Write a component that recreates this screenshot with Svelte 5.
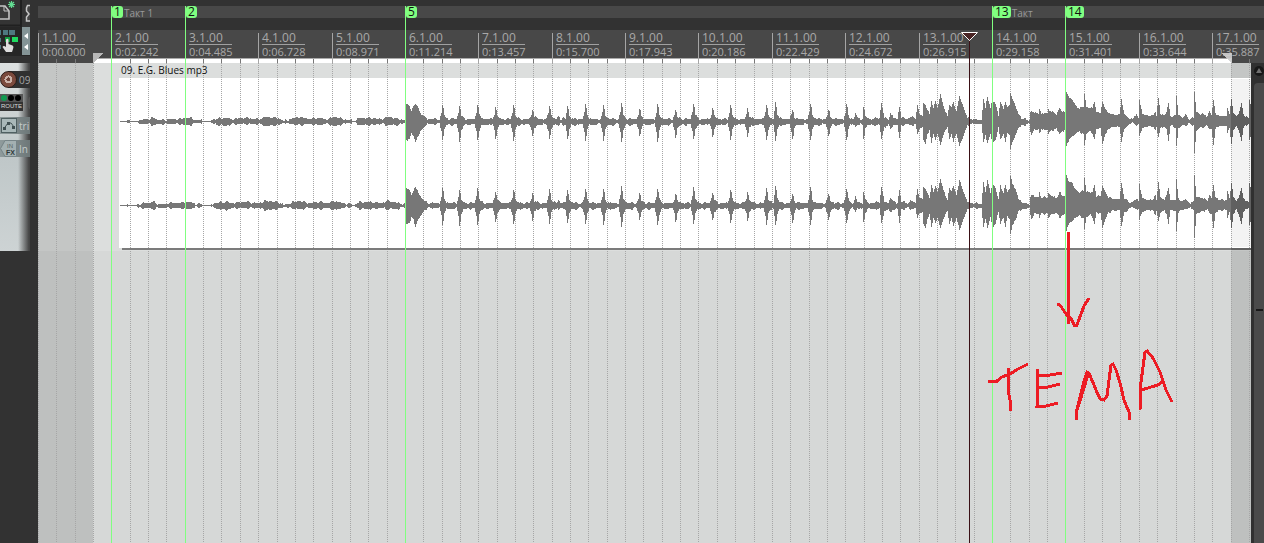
<script>
  const BAR = 73.388;
  const ORIGIN = 38;

  const times = [
    '0:00.000', '0:02.242', '0:04.485', '0:06.728', '0:08.971', '0:11.214',
    '0:13.457', '0:15.700', '0:17.943', '0:20.186', '0:22.429', '0:24.672',
    '0:26.915', '0:29.158', '0:31.401', '0:33.644', '0:35.887'
  ];

  const barX = (n) => Math.round(n * BAR);

  const bars = times.map((time, i) => ({
    label: `${i + 1}.1.00`,
    time,
    width: barX(i + 1) - barX(i)
  }));

  const gridLines = Array.from({ length: 120 }, (_, i) => barX(i / 4));

  const markers = [
    { id: 1, bar: 1, name: 'Такт 1' },
    { id: 2, bar: 2, name: '' },
    { id: 5, bar: 5, name: '' },
    { id: 13, bar: 13, name: 'Такт' },
    { id: 14, bar: 14, name: '' }
  ];

  // Peaks as [x, above, below] around the channel's centre line
  const intro = [
    [120, 0, 0], [126, 0, 0], [128, 1, 1], [131, 0, 0], [136, 0, 0], [138, 1, 2],
    [148, 2, 2], [153, 3, 3], [158, 1, 2], [176, 2, 2], [190, 3, 3], [196, 1, 1],
    [206, 0, 0], [210, 0, 0], [213, 2, 2], [225, 3, 4], [232, 2, 2], [243, 3, 2],
    [258, 2, 2], [265, 4, 4], [278, 3, 3], [283, 0, 1], [297, 4, 3], [310, 2, 2],
    [316, 3, 3], [328, 2, 2], [334, 4, 4], [342, 2, 2], [354, 0, 0], [360, 3, 3],
    [371, 3, 3], [380, 2, 2], [389, 4, 3], [398, 2, 3], [404, 1, 1],
    [405, 14, 14], [406, 17, 18], [409, 15, 17], [411, 11, 12], [413, 14, 13], [415, 17, 20],
    [417, 15, 15], [419, 10, 12], [422, 6, 7], [424, 4, 4], [427, 2, 2]
  ];

  const hits = [
    [442, 16, 18], [459, 15, 20], [477, 17, 19], [495, 14, 17], [513, 16, 19],
    [532, 12, 15], [549, 16, 18], [558, 5, 4], [567, 15, 17], [585, 16, 18],
    [603, 15, 18], [621, 18, 20], [639, 12, 14], [657, 16, 19], [675, 11, 16],
    [693, 18, 18], [712, 13, 15], [730, 16, 18], [747, 13, 15], [766, 17, 19],
    [775, 19, 19], [792, 11, 17], [810, 17, 18], [828, 11, 14], [846, 16, 17],
    [855, 8, 5], [863, 13, 16]
  ];

  const outro = [
    [879, 3, 3], [881, 18, 17], [884, 3, 5], [888, 2, 3], [890, 8, 7], [893, 3, 3],
    [897, 2, 3], [899, 15, 17], [901, 3, 3], [907, 2, 2], [911, 4, 3], [915, 2, 2],
    [917, 17, 13], [919, 7, 7], [922, 5, 5], [923, 18, 18], [925, 16, 22], [927, 12, 13],
    [929, 7, 8], [931, 19, 20], [933, 13, 12], [935, 20, 18], [937, 13, 12], [940, 26, 22],
    [943, 15, 13], [947, 5, 5], [949, 16, 17], [951, 14, 12], [953, 19, 20], [956, 10, 12],
    [959, 24, 23], [962, 17, 17], [965, 8, 8], [967, 3, 3], [972, 2, 2], [981, 1, 2],
    [983, 23, 21], [985, 13, 13], [987, 24, 21], [990, 13, 12], [992, 22, 22], [995, 17, 18],
    [998, 5, 5], [1000, 20, 18], [1003, 12, 12], [1005, 19, 20], [1007, 13, 10], [1009, 16, 13],
    [1010, 29, 28], [1012, 22, 20], [1015, 15, 13], [1018, 7, 6], [1022, 2, 3], [1029, 1, 2],
    [1030, 9, 10], [1031, 10, 13], [1034, 8, 7], [1038, 8, 8], [1039, 13, 12], [1041, 7, 7],
    [1047, 8, 8], [1048, 12, 12], [1051, 9, 8], [1056, 7, 7], [1059, 13, 12], [1062, 9, 9],
    [1065, 9, 8], [1066, 30, 25], [1069, 23, 17], [1071, 22, 15], [1075, 16, 12], [1079, 12, 9],
    [1083, 14, 12], [1084, 27, 23], [1086, 14, 12], [1090, 12, 8], [1092, 13, 12], [1094, 20, 18],
    [1096, 9, 7], [1100, 8, 6], [1102, 19, 22], [1105, 13, 13], [1108, 7, 6], [1119, 6, 4],
    [1121, 22, 20], [1124, 7, 7], [1129, 2, 2], [1132, 3, 1], [1136, 6, 3], [1138, 3, 2],
    [1139, 21, 14], [1142, 7, 6], [1146, 5, 4], [1153, 6, 5], [1155, 9, 8], [1156, 5, 5],
    [1158, 23, 15], [1160, 8, 7], [1164, 5, 4], [1166, 9, 7], [1168, 18, 19], [1170, 5, 4],
    [1175, 5, 5], [1176, 25, 24], [1178, 7, 7], [1182, 3, 3], [1185, 6, 3], [1189, 2, 2],
    [1193, 3, 3], [1194, 29, 31], [1196, 9, 9], [1201, 7, 5], [1207, 5, 4], [1209, 10, 7],
    [1211, 6, 7], [1213, 20, 22], [1215, 8, 7], [1219, 5, 4], [1226, 5, 4], [1227, 14, 12],
    [1229, 7, 6], [1231, 21, 21], [1233, 8, 8], [1236, 5, 4], [1238, 7, 8], [1241, 17, 18],
    [1243, 7, 6], [1248, 3, 2], [1249, 21, 18], [1251, 12, 12]
  ];

  const middle = hits.flatMap(([x, up, down]) => [
    [x - 3, 2, 2], [x - 1, up * 0.5, down * 0.5], [x, up, down],
    [x + 1, up * 0.8, down * 0.8], [x + 2, up * 0.35, down * 0.4], [x + 4, 3, 3], [x + 7, 2, 3]
  ]);

  const peaks = [...intro, ...middle, ...outro].sort((a, b) => a[0] - b[0]);

  function peakAt(x) {
    const i = peaks.findIndex((p) => p[0] >= x);
    if (i <= 0) return [0, 0];
    const [x0, u0, d0] = peaks[i - 1];
    const [x1, u1, d1] = peaks[i];
    const t = x1 === x0 ? 1 : (x - x0) / (x1 - x0);
    return [u0 + (u1 - u0) * t, d0 + (d1 - d0) * t];
  }

  // One column per pixel with a little deterministic ripple
  function channelPath(centre, seed, from, to) {
    let d = '';
    for (let x = from; x < to; x++) {
      const [up, down] = peakAt(x);
      const wave = Math.sin(x * 0.9 + seed) * Math.cos(x * 0.23 + seed);
      const ripple = up < 0.5 ? 0 : Math.round(wave * 0.9);
      const top = Math.max(0, Math.round(up + ripple));
      const bottom = Math.max(0, Math.round(down + ripple));
      d += `M${x} ${centre - top}h1v${top + bottom + 1}h-1z`;
    }
    return d;
  }

  // The part past the time selection is drawn darker
  const channels = [
    { d: channelPath(121, 0, 120, 1231), fill: '#777' },
    { d: channelPath(205, 2, 120, 1231), fill: '#777' },
    { d: channelPath(121, 0, 1231, 1251), fill: '#606060' },
    { d: channelPath(205, 2, 1231, 1251), fill: '#606060' }
  ];

  const strokes = [
    '1068.5,232 1068.5,324',
    '1057,304 1060,305 1066,314 1072,320 1074,325 1077,325 1081,314 1084,306 1089,298',
    '988,381 997,381 1002,377 1010,374 1018,369 1028,364',
    '1008,368 1008,390 1010,400 1011,411',
    '1038,369 1037,406 1046,406 1058,403',
    '1038,376 1050,375 1062,373',
    '1038,388 1048,387 1060,384',
    '1076,420 1077,409 1083,385 1087,372 1089,373 1096,390 1100,399 1104,400 1107,396 1109,380 1111,365 1113,364 1116,370 1120,383 1124,400 1129,412 1129,420',
    '1077,410 1084,388 1088,374',
    '1140,410 1141,382 1145,352 1147,351 1153,358 1160,372 1166,390 1172,402',
    '1141,390 1158,385 1163,381'
  ];
</script>

<div class="daw">
  <aside class="side">
    <div class="toolbar">
      <button class="tool" aria-label="New project">
        <svg width="30" height="27">
          <rect width="30" height="27" fill="#343434" />
          <path d="M-1 6H5L9 11V19H-1" fill="#3b3b3b" stroke="#c4c4c4" stroke-width="1.6" />
          <path d="M4 6V11H9" fill="none" stroke="#c4c4c4" />
          <path d="M11.500 1V8M8 4.500H15M9 2L14 7M14 2L9 7" stroke="#62dd92" stroke-width="1.2" />
          <path d="M0 25.500H20M21 0V27" stroke="#202020" stroke-width="2" />
          <path d="M30 5.500H27.500L26.500 8V11L29 14L26.500 17V21H30" fill="#444" stroke="#c4c4c4" stroke-width="1.500" />
        </svg>
      </button>
      <button class="tool" aria-label="Item grouping">
        <svg width="30" height="29">
          <rect width="30" height="29" fill="#262626" />
          <g fill="#4e7880">
            <rect x="-3" y="3" width="4" height="5" />
            <rect x="3" y="3" width="5" height="5" />
            <rect x="9" y="3" width="6" height="5" />
            <rect x="-3" y="11" width="4" height="4" />
            <rect x="-3" y="18" width="4" height="4" />
          </g>
          <rect x="5" y="10" width="5" height="5" fill="#139b41" />
          <rect x="12" y="10" width="6" height="5" fill="#1fda60" />
          <path d="M6 12.500Q7.500 11 8.500 12.500V17L12.500 18.500Q14 19 13 22L12 25H6L2.500 20Q3.500 18 6 20Z" fill="#ddd" />
          <rect x="22" width="8" height="28" fill="#849496" />
          <path d="M28 6V12L24 9ZM28 17V23L24 20Z" fill="#fff" />
        </svg>
      </button>
    </div>

    <div class="track">
      <div class="row name-row">
        <button class="rec" aria-label="Record arm"></button>
        <span class="name">09</span>
      </div>
      <div class="row">
        <button class="route">
          <span class="leds"><i class="on"></i><i></i><i></i></span>
          <span class="route-text">ROUTE</span>
        </button>
        <span class="knob"></span>
      </div>
      <div class="row param">
        <button class="env" aria-label="Envelopes">
          <svg width="17" height="15">
            <rect x="1.500" y="0.500" width="15" height="14" fill="#a9b8b9" stroke="#506062" />
            <path d="M4 10.500L8 5L11 5L14 9" fill="none" stroke="#405052" />
            <path d="M3 9h3v3H3zM7 4h3v3H7zM12 8h3v3h-3z" fill="#405052" />
          </svg>
        </button>
        <span>tri</span>
      </div>
      <div class="row param">
        <button class="env" aria-label="Input effects">
          <svg width="17" height="17">
            <path d="M0.500 8.500L5 0.500H16.500V16.500H5Z" fill="#a3b0b1" stroke="#768487" />
            <text x="7" y="8" class="in">IN</text>
            <text x="6" y="15" class="fx">FX</text>
          </svg>
        </button>
        <span>In</span>
      </div>
    </div>
  </aside>

  <main class="timeline">
    <div class="marker-lane"></div>
    <div class="ruler">
      {#each bars as bar}
        <div class="bar" style="width: {bar.width}px">
          <div class="bar-label">{bar.label}</div>
          <div class="bar-time">{bar.time}</div>
        </div>
      {/each}
    </div>

    <div class="arrange">
      <svg class="canvas" role="img" aria-label="Arrange view">
        <g transform="translate({-ORIGIN} -63)" shape-rendering="crispEdges">
          <rect x="38" y="63" width="2400" height="188" fill="#c4c6c5" />
          <rect x="38" y="251" width="2400" height="2000" fill="#bec0bf" />
          <rect x="93" y="63" width="1138" height="188" fill="#dcdedd" />
          <rect x="93" y="251" width="1138" height="2000" fill="#d6d8d7" />
          <rect x="119" y="78" width="1132" height="170" fill="#fff" />
          <rect x="1231" y="79" width="20" height="168" fill="#f3f3f3" />
          <g transform="translate({ORIGIN} 0)">
            {#each gridLines as x}
              <path d="M{x + 0.5} 63V2000" class="grid" />
            {/each}
          </g>
          {#each channels as channel}
            <path d={channel.d} fill={channel.fill} />
          {/each}
          <rect x="122" y="248" width="1109" height="2" fill="#7b7b7b" />
          <rect x="1231" y="248" width="20" height="2" fill="#626262" />
        </g>
        <text x="83" y="11" class="item-name">09. E.G. Blues mp3</text>
      </svg>
      <div class="scrollbar">
        <button class="up" aria-label="Scroll up">
          <svg width="13" height="13">
            <circle cx="8" cy="8" r="5" fill="#181818" />
            <path d="M5 10L8 5L11 10Z" fill="#707070" />
          </svg>
        </button>
        <div class="thumb"><i></i></div>
      </div>
    </div>

    <svg class="overlay" aria-hidden="true">
      <g transform="translate({-ORIGIN} 0)" shape-rendering="crispEdges">
        <rect x="93" y="58" width="1139" height="5" fill="#fff" />
        <rect x="93" y="58" width="1139" height="1" fill="#aaa" />
        {#each gridLines as x, i}
          <rect x={x + ORIGIN} y={i % 4 ? 59 : 33} width="1" height={i % 4 ? 4 : 30} fill={i % 4 ? '#777' : '#a5a5a5'} />
        {/each}
        <path d="M93 53H104L93 63Z" fill="#b8b8b8" />
        <path d="M1221 53H1232V63Z" fill="#d0d0d0" opacity="0.900" />
      </g>
    </svg>

    {#each markers as m}
      <div class="marker" style="left: {barX(m.bar)}px">
        <span class="flag">{m.id}</span>
        <span class="marker-name">{m.name}</span>
      </div>
    {/each}

    <svg class="overlay" aria-hidden="true">
      <g transform="translate({-ORIGIN} 0)">
        <path d="M969.500 41V2000" stroke="#3a1015" />
        <path d="M961.500 32.500H977.500L969.500 40.500Z" fill="#4a2525" stroke="#fff" />
        {#each strokes as points}
          <polyline {points} class="pen" />
        {/each}
      </g>
    </svg>
  </main>
</div>

<style>
  :global(body) {
    margin: 0;
    background: #323232;
  }

  button {
    padding: 0;
    border: 0;
    background: none;
    display: block;
  }

  svg {
    display: block;
  }

  .daw {
    display: flex;
    min-height: 100vh;
    font-family: 'Open Sans', 'Noto Sans', sans-serif;
    overflow: hidden;
  }

  .side {
    width: 38px;
    flex: none;
    background: #323232;
  }

  .toolbar {
    height: 63px;
    width: 30px;
  }

  .track {
    width: 30px;
    height: 188px;
    box-sizing: border-box;
    padding-top: 8px;
    overflow: hidden;
    display: flex;
    flex-direction: column;
    gap: 6px;
    background: linear-gradient(90deg, transparent 18px, #444 29px), linear-gradient(#dce0e0, #bfc7c8 50%, #cdd3d4);
  }

  .row {
    display: flex;
    align-items: center;
    height: 17px;
    width: 30px;
    overflow: hidden;
    white-space: nowrap;
    flex: none;
  }

  .name-row {
    background: linear-gradient(90deg, transparent 8px, #303030 8px);
    color: #a4a4a4;
    font-size: 10px;
    gap: 2px;
  }

  .rec {
    width: 17px;
    height: 17px;
    flex: none;
    box-sizing: border-box;
    border-radius: 50%;
    border: 1px solid #2b1b17;
    background: radial-gradient(circle, #6f4439 2px, #c9b0a7 2px, #c9b0a7 4px, #7b4a3d 4px);
  }

  .route {
    width: 23px;
    height: 17px;
    flex: none;
    background: #333;
    color: #d8d8d8;
  }

  .leds {
    display: flex;
    gap: 1px;
    padding: 1px;
    background: #555;
  }

  .leds i {
    width: 6px;
    height: 6px;
    border-radius: 50%;
    background: #000;
  }

  .leds .on {
    background: #0f9a50;
  }

  .route-text {
    display: block;
    font: 6px/9px 'Liberation Sans', sans-serif;
    text-align: center;
  }

  .knob {
    width: 16px;
    height: 16px;
    flex: none;
    margin-left: 4px;
    border-radius: 50%;
    background: #555;
  }

  .param {
    background: linear-gradient(90deg, #8f9b9c, #6d7778);
    color: #c4cccc;
    font-size: 10px;
    gap: 2px;
  }

  .env {
    flex: none;
  }

  .in {
    font: 6px 'Liberation Sans', sans-serif;
    fill: #53605f;
  }

  .fx {
    font: bold 7px 'Liberation Sans', sans-serif;
    fill: #2f3a3b;
  }

  .timeline {
    position: relative;
    flex: 1;
    min-width: 0;
    display: flex;
    flex-direction: column;
    overflow: hidden;
  }

  .marker-lane {
    height: 12px;
    margin: 6px 0 12px;
    background: #484848;
  }

  .ruler {
    display: flex;
    height: 33px;
    background: #484848;
    color: #a8a8a8;
  }

  .bar {
    flex: none;
    box-sizing: border-box;
    padding-left: 4px;
    white-space: nowrap;
  }

  .bar-label {
    width: 43px;
    height: 14px;
    border-bottom: 1px solid #a0a0a0;
    font-size: 12px;
    line-height: 16px;
  }

  .bar-time {
    font-size: 11px;
    line-height: 13px;
  }

  .arrange {
    flex: 1;
    display: flex;
  }

  .canvas {
    flex: 1;
    min-width: 0;
    height: auto;
  }

  .grid {
    stroke: #a6a6a6;
    stroke-dasharray: 1 1;
  }

  .item-name {
    font-size: 10px;
    fill: #111;
  }

  .scrollbar {
    width: 13px;
    flex: none;
    display: flex;
    flex-direction: column;
    background: #303030;
  }

  .up {
    margin-bottom: 7px;
  }

  .thumb {
    flex: 1;
    margin-left: 3px;
    border-radius: 4px 0 0 0;
    background: #4a4a4a;
  }

  .thumb i {
    display: block;
    height: 2px;
    margin: 226px 1px 0 2px;
    background: #181818;
  }

  .overlay {
    position: absolute;
    top: 0;
    left: 0;
    width: 100%;
    height: 100%;
    pointer-events: none;
  }

  .marker {
    position: absolute;
    top: 6px;
    bottom: 0;
    display: flex;
    align-items: flex-start;
    border-left: 1px solid #80ff80;
    font-size: 10px;
    line-height: 12px;
  }

  .flag {
    padding: 0 2px;
    border-radius: 3px;
    background: #80ff80;
    color: #111;
    font-size: 12px;
  }

  .marker-name {
    padding-left: 1px;
    line-height: 14px;
    color: #999;
  }

  .pen {
    fill: none;
    stroke: #ed1c24;
    stroke-width: 3;
    shape-rendering: crispEdges;
  }
</style>
